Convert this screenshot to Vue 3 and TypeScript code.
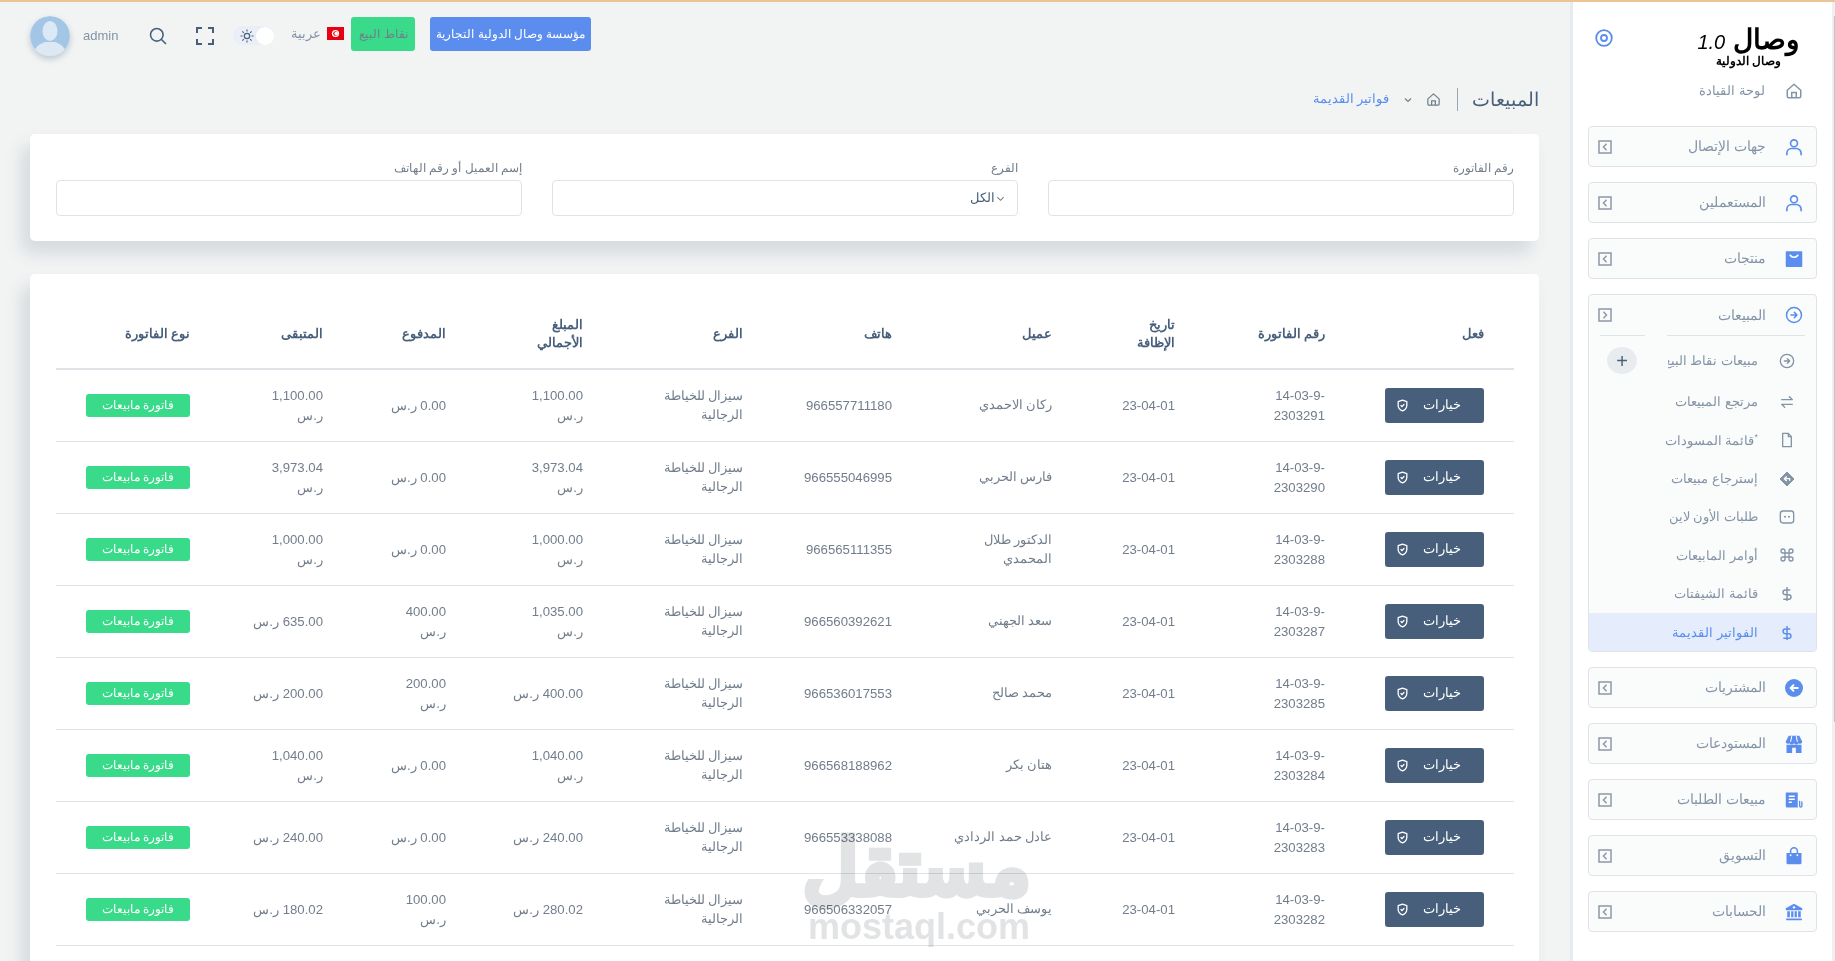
<script setup lang="ts">
interface Invoice {
  no: string
  client: string
  phone: string
  total: string
  paid: string
  left: string
}

interface NavItem {
  label: string
  icon: string
  star?: boolean
}

const invoices: Invoice[] = [
  { no: '14-03-9-2303291', client: 'ركان الاحمدي', phone: '966557711180', total: '1,100.00', paid: '0.00', left: '1,100.00' },
  { no: '14-03-9-2303290', client: 'فارس الحربي', phone: '966555046995', total: '3,973.04', paid: '0.00', left: '3,973.04' },
  { no: '14-03-9-2303288', client: 'الدكتور طلال المحمدي', phone: '966565111355', total: '1,000.00', paid: '0.00', left: '1,000.00' },
  { no: '14-03-9-2303287', client: 'سعد الجهني', phone: '966560392621', total: '1,035.00', paid: '400.00', left: '635.00' },
  { no: '14-03-9-2303285', client: 'محمد صالح', phone: '966536017553', total: '400.00', paid: '200.00', left: '200.00' },
  { no: '14-03-9-2303284', client: 'هتان بكر', phone: '966568188962', total: '1,040.00', paid: '0.00', left: '1,040.00' },
  { no: '14-03-9-2303283', client: 'عادل حمد الردادي', phone: '966553338088', total: '240.00', paid: '0.00', left: '240.00' },
  { no: '14-03-9-2303282', client: 'يوسف الحربي', phone: '966506332057', total: '280.02', paid: '100.00', left: '180.02' }
]

const headers = ['فعل', 'رقم الفاتورة', 'تاريخ الإظافة', 'عميل', 'هاتف', 'الفرع', 'المبلغ الأجمالي', 'المدفوع', 'المتبقى', 'نوع الفاتورة']
const colWidths = [159, 150, 123, 160, 149, 160, 137, 123, 133, 164]

const topItems: NavItem[] = [
  { label: 'جهات الإتصال', icon: 'user' },
  { label: 'المستعملين', icon: 'user' },
  { label: 'منتجات', icon: 'box' }
]

const subItems: NavItem[] = [
  { label: 'مرتجع المبيعات', icon: 'swap' },
  { label: 'قائمة المسودات', icon: 'file', star: true },
  { label: 'إسترجاع مبيعات', icon: 'turn' },
  { label: 'طلبات الأون لاين', icon: 'chat' },
  { label: 'أوامر المابيعات', icon: 'command' },
  { label: 'قائمة الشيفتات', icon: 'dollar' }
]

const bottomItems: NavItem[] = [
  { label: 'المشتريات', icon: 'back' },
  { label: 'المستودعات', icon: 'store' },
  { label: 'مبيعات الطلبات', icon: 'receipt' },
  { label: 'التسويق', icon: 'bag' },
  { label: 'الحسابات', icon: 'bank' }
]

const icons: Record<string, string> = {
  home: '<path d="M3 11 12 3l9 8v8a2 2 0 0 1-2 2H5a2 2 0 0 1-2-2z" fill="none" stroke="currentColor" stroke-width="2" stroke-linejoin="round"/><path d="M9 21v-7h6v7" fill="none" stroke="currentColor" stroke-width="2"/>',
  user: '<circle cx="12" cy="7" r="4.6" fill="none" stroke="currentColor" stroke-width="2.2"/><path d="M2.5 23v-2.5a6.5 6.5 0 0 1 6.500-6.500h6a6.500 6.500 0 0 1 6.500 6.500V23" fill="none" stroke="currentColor" stroke-width="2.2"/>',
  box: '<rect x="1" y="1.500" width="22" height="21" rx="1" fill="currentColor"/><path d="M7 7c2 3.500 8 3.500 10 0" fill="none" stroke="#fff" stroke-width="2.200" stroke-linecap="round"/>',
  forward: '<circle cx="12" cy="12" r="10" fill="none" stroke="currentColor" stroke-width="2"/><path d="M8 12h8M12.500 8.500 16 12l-3.500 3.500" fill="none" stroke="currentColor" stroke-width="2" stroke-linecap="round" stroke-linejoin="round"/>',
  swap: '<path d="M4 8.500h16M15.500 4 20 8.500M20 15.500H4M8.500 20 4 15.500" fill="none" stroke="currentColor" stroke-width="2" stroke-linecap="round" stroke-linejoin="round"/>',
  file: '<path d="M14 2H5.500v20h13V7z" fill="none" stroke="currentColor" stroke-width="2" stroke-linejoin="round"/><path d="M14 2v5h4.500" fill="none" stroke="currentColor" stroke-width="2"/>',
  turn: '<path d="M12 1.500 22.500 12 12 22.500 1.500 12z" fill="currentColor" stroke="currentColor" stroke-width="1.500" stroke-linejoin="round"/><path d="M16 14v-2.500H8.500M11 8.500l-3 3 3 3" fill="none" stroke="#fff" stroke-width="2" stroke-linecap="round" stroke-linejoin="round"/>',
  chat: '<rect x="2" y="3" width="20" height="18" rx="4" fill="none" stroke="currentColor" stroke-width="2"/><circle cx="9" cy="11.500" r="1.500" fill="currentColor"/><circle cx="15" cy="11.500" r="1.500" fill="currentColor"/>',
  command: '<path d="M15 6v12a3 3 0 1 0 3-3H6a3 3 0 1 0 3 3V6a3 3 0 1 0-3 3h12a3 3 0 1 0-3-3z" fill="none" stroke="currentColor" stroke-width="2" stroke-linejoin="round"/>',
  dollar: '<path d="M12 1.500v21M17 6H9.500a3.500 3.500 0 0 0 0 7h5a3.500 3.500 0 0 1 0 7H6.500" fill="none" stroke="currentColor" stroke-width="2.200"/>',
  back: '<circle cx="12" cy="12" r="12" fill="currentColor"/><path d="M18 12H8M12 7.500 7.500 12l4.500 4.500" fill="none" stroke="#fff" stroke-width="2.600"/>',
  store: '<path d="M5 1h14l4 7.500a3 3 0 0 1-5 2.500 3.500 3.500 0 0 1-6 0 3.500 3.500 0 0 1-6 0 3 3 0 0 1-5-2.500z" fill="currentColor"/><path d="M9 1.500 7.500 9M15 1.500 16.500 9" stroke="#fff" stroke-width="1.400"/><path d="M2 13h7.500v11H2zM14.500 13H22v11h-7.500zM9.500 13h5v4h-5z" fill="currentColor"/>',
  receipt: '<path d="M1 2h16v18a2 2 0 0 0 .5 2H3a2 2 0 0 1-2-2z" fill="currentColor"/><path d="M5 7h8M5 11h8M5 15h4" stroke="#fff" stroke-width="2"/><path d="M19.500 13v7a1.500 1.500 0 0 0 3 0v-6" fill="none" stroke="currentColor" stroke-width="1.800"/>',
  bag: '<path d="M2 8h20v13a2 2 0 0 1-2 2H4a2 2 0 0 1-2-2z" fill="currentColor"/><path d="M7.500 11V5.500a4.500 4.500 0 0 1 9 0V11" fill="none" stroke="currentColor" stroke-width="2"/><circle cx="7.500" cy="11" r="1.200" fill="#fff"/><circle cx="16.500" cy="11" r="1.200" fill="#fff"/>',
  bank: '<path d="M12 1 23 7v2.500H1V7z" fill="currentColor"/><circle cx="12" cy="5.800" r="1.600" fill="#fff"/><path d="M3 11h3.500v8H3zM8.200 11h3v8h-3zM12.800 11h3v8h-3zM17.500 11H21v8h-3.500zM1.500 20.500h21V23h-21z" fill="currentColor"/>',
  shield: '<path d="M12 2 4 5v6.500c0 5 3.400 8.700 8 10.500 4.600-1.800 8-5.500 8-10.500V5z" fill="none" stroke="currentColor" stroke-width="2.400" stroke-linejoin="round"/><path d="m8.500 11.500 2.500 2.500 4.500-4.500" fill="none" stroke="currentColor" stroke-width="2.400"/>'
}
</script>

<template>
  <div class="page">
    <div class="rail"><i></i></div>

    <aside class="sidebar">
      <div class="brand">
        <div class="brand__text">
          <div class="brand__name">وصال <em>1.0</em></div>
          <div class="brand__sub">وصال الدولية</div>
        </div>
        <svg class="brand__dot" viewBox="0 0 18 18">
          <circle cx="9" cy="9" r="7.800" fill="none" stroke="currentColor" stroke-width="1.800" />
          <circle cx="9" cy="9" r="3" fill="none" stroke="currentColor" stroke-width="1.800" />
        </svg>
      </div>

      <div class="dash">
        <svg class="dash__icon" viewBox="0 0 24 24" v-html="icons.home"></svg>
        <span>لوحة القيادة</span>
      </div>

      <div v-for="item in topItems" :key="item.label" class="nav-item">
        <svg class="nav-icon" viewBox="0 0 24 24" v-html="icons[item.icon]"></svg>
        <span class="nav-label">{{ item.label }}</span>
        <svg class="nav-toggle" viewBox="0 0 14 14">
          <rect x="1" y="1" width="12" height="12" fill="none" stroke="currentColor" stroke-width="1.500" />
          <path d="M8.500 3.800 5.500 7l3 3.200" fill="none" stroke="currentColor" stroke-width="1.500" />
        </svg>
      </div>

      <div class="nav-group">
        <div class="nav-group__head">
          <svg class="nav-icon" viewBox="0 0 24 24" v-html="icons.forward"></svg>
          <span class="nav-label">المبيعات</span>
          <svg class="nav-toggle" viewBox="0 0 14 14">
            <rect x="1" y="1" width="12" height="12" fill="none" stroke="currentColor" stroke-width="1.500" />
            <path d="M5.500 3.800 8.500 7l-3 3.200" fill="none" stroke="currentColor" stroke-width="1.500" />
          </svg>
        </div>
        <div class="nav-group__rule">
          <i class="rule-long"></i>
          <i class="rule-short"></i>
        </div>

        <div class="sub-item sub-item--first">
          <svg class="sub-icon" viewBox="0 0 24 24" v-html="icons.forward"></svg>
          <span class="sub-label sub-label--clip">مبيعات نقاط البيع</span>
          <span class="sub-add">+</span>
        </div>
        <div v-for="item in subItems" :key="item.label" class="sub-item">
          <svg class="sub-icon" viewBox="0 0 24 24" v-html="icons[item.icon]"></svg>
          <span class="sub-label"><sup v-if="item.star" class="sub-star">*</sup>{{ item.label }}</span>
        </div>
        <div class="sub-item sub-item--active">
          <svg class="sub-icon" viewBox="0 0 24 24" v-html="icons.dollar"></svg>
          <span class="sub-label">الفواتير القديمة</span>
        </div>
      </div>

      <div v-for="item in bottomItems" :key="item.label" class="nav-item">
        <svg class="nav-icon" viewBox="0 0 24 24" v-html="icons[item.icon]"></svg>
        <span class="nav-label">{{ item.label }}</span>
        <svg class="nav-toggle" viewBox="0 0 14 14">
          <rect x="1" y="1" width="12" height="12" fill="none" stroke="currentColor" stroke-width="1.500" />
          <path d="M8.500 3.800 5.500 7l3 3.200" fill="none" stroke="currentColor" stroke-width="1.500" />
        </svg>
      </div>
    </aside>

    <main class="main">
      <header class="topbar">
        <svg class="avatar" viewBox="0 0 40 40">
          <circle cx="20" cy="20" r="20" fill="#a4c6e6" />
          <ellipse cx="20" cy="15" rx="7.500" ry="10" fill="#dce9f5" />
          <path d="M4 40c0-10 6-12 11-14h10c5 2 11 4 11 14z" fill="#dce9f5" />
        </svg>
        <span class="topbar__admin">admin</span>
        <svg class="topbar__search" viewBox="0 0 18 18">
          <circle cx="7.800" cy="7.800" r="6.300" fill="none" stroke="currentColor" stroke-width="1.600" />
          <path d="m12.500 12.500 4.500 4.500" stroke="currentColor" stroke-width="1.600" />
        </svg>
        <svg class="topbar__expand" viewBox="0 0 18 18">
          <path d="M1 6V1h5M12 1h5v5M17 12v5h-5M6 17H1v-5" fill="none" stroke="currentColor" stroke-width="2" />
        </svg>
        <div class="theme-toggle">
          <svg viewBox="0 0 14 14">
            <circle cx="7" cy="7" r="2.700" fill="none" stroke="currentColor" stroke-width="1.200" />
            <path d="M7 .5v2M7 11.500v2M.5 7h2M11.500 7h2M2.400 2.400l1.400 1.400M10.200 10.200l1.400 1.400M2.400 11.600l1.400-1.400M10.200 3.800l1.400-1.400" stroke="currentColor" stroke-width="1.100" />
          </svg>
          <i></i>
        </div>
        <span class="topbar__lang">عربية</span>
        <svg class="topbar__flag" viewBox="0 0 17 13">
          <rect width="17" height="13" fill="#e70013" />
          <circle cx="8.500" cy="6.500" r="3.600" fill="#fff" />
          <circle cx="8.500" cy="6.500" r="2.300" fill="#e70013" />
          <circle cx="9.200" cy="6.500" r="1.800" fill="#fff" />
        </svg>
        <button class="btn-pos" type="button">نقاط البيع</button>
        <button class="btn-company" type="button">مؤسسة وصال الدولية التجارية</button>
      </header>

      <div class="crumbs">
        <h1 class="crumbs__title">المبيعات</h1>
        <svg class="crumbs__home" viewBox="0 0 24 24" v-html="icons.home"></svg>
        <svg class="crumbs__chev" viewBox="0 0 10 10">
          <path d="m2 3.500 3 3 3-3" fill="none" stroke="currentColor" stroke-width="1.200" />
        </svg>
        <span class="crumbs__link">فواتير القديمة</span>
      </div>

      <section class="card filters">
        <label class="field">
          <span>رقم الفاتورة</span>
          <div class="control"></div>
        </label>
        <label class="field">
          <span>الفرع</span>
          <div class="control control--select">
            <svg viewBox="0 0 10 10">
              <path d="m1.500 3.500 3.500 3.500 3.500-3.500" fill="none" stroke="currentColor" stroke-width="1.200" />
            </svg>
            الكل
          </div>
        </label>
        <label class="field">
          <span>إسم العميل أو رقم الهاتف</span>
          <div class="control"></div>
        </label>
      </section>

      <section class="card table-card">
        <table class="sales">
          <colgroup>
            <col v-for="(w, i) in colWidths" :key="i" :width="w" />
          </colgroup>
          <thead>
            <tr>
              <th v-for="h in headers" :key="h">{{ h }}</th>
            </tr>
          </thead>
          <tbody>
            <tr v-for="row in invoices" :key="row.no">
              <td>
                <button class="btn-options" type="button">
                  خيارات
                  <svg viewBox="0 0 24 24" v-html="icons.shield"></svg>
                </button>
              </td>
              <td>{{ row.no }}</td>
              <td>23-04-01</td>
              <td class="cell-name">{{ row.client }}</td>
              <td>{{ row.phone }}</td>
              <td class="cell-name">سيزال للخياطة الرجالية</td>
              <td>{{ row.total }} ر.س</td>
              <td>{{ row.paid }} ر.س</td>
              <td>{{ row.left }} ر.س</td>
              <td><span class="badge">فاتورة مابيعات</span></td>
            </tr>
          </tbody>
        </table>
      </section>
    </main>

    <div class="watermark">
      <div class="watermark__ar">مستقل</div>
      <div class="watermark__en">mostaql.com</div>
    </div>
  </div>
</template>

<style scoped>
.page {
  position: relative;
  display: flex;
  direction: rtl;
  width: 100vw;
  height: 100vh;
  box-sizing: border-box;
  overflow: hidden;
  border-top: 2px solid #edc49a;
  background: #f2f4f4;
  color: #727e8c;
  font-family: "Liberation Sans", sans-serif;
  font-size: 13px;
  line-height: 1.5;
}

.rail {
  flex: 0 0 3px;
  padding-top: 14px;
  background: #eef0f2;
}

.rail i {
  display: block;
  width: 1px;
  height: 706px;
  background: #bfc3c7;
}

.sidebar {
  flex: 0 0 259px;
  box-sizing: border-box;
  padding: 0 15px;
  box-shadow: -3px 0 0 #e6ebf0;
  background: #fff;
}

.brand {
  display: flex;
  justify-content: space-between;
  height: 43px;
  padding: 21px 17px 0 7px;
  color: #000;
}

.brand__name {
  font-size: 28px;
  font-weight: 700;
  line-height: 34px;
  white-space: nowrap;
}

.brand__name em {
  font-size: 20px;
  font-weight: 400;
}

.brand__sub {
  margin-top: -6px;
  margin-right: 19px;
  font-size: 12px;
  font-weight: 700;
  line-height: 16px;
}

.brand__dot {
  width: 18px;
  height: 18px;
  margin-top: 6px;
  color: #5a8dee;
}

.dash {
  display: flex;
  align-items: center;
  gap: 20px;
  height: 20px;
  padding-right: 14px;
  margin-top: 15px;
  margin-bottom: 25px;
  color: #8494a7;
}

.dash__icon {
  width: 18px;
  height: 18px;
}

.nav-item,
.nav-group__head {
  display: flex;
  align-items: center;
  box-sizing: border-box;
  height: 41px;
  padding: 0 13px 0 9px;
}

.nav-item {
  margin-bottom: 15px;
  border: 1px solid #dfe3e7;
  border-radius: 4px;
  background: #fafbfb;
}

.nav-icon {
  flex: 0 0 18px;
  width: 18px;
  height: 18px;
  color: #5a8dee;
}

.nav-label {
  flex: 1;
  margin-right: 19px;
  color: #8494a7;
  font-size: 14px;
  white-space: nowrap;
}

.nav-toggle {
  flex: 0 0 14px;
  width: 14px;
  height: 14px;
  color: #8f98a6;
}

.nav-group {
  box-sizing: border-box;
  height: 358px;
  margin-bottom: 15px;
  overflow: hidden;
  border: 1px solid #dfe3e7;
  border-radius: 4px;
  background: #fafbfb;
}

.nav-group__head {
  height: 40px;
}

.nav-group__rule {
  display: flex;
  gap: 22px;
  height: 1px;
  margin-right: 11px;
}

.nav-group__rule i {
  display: block;
  height: 1px;
  background: #dfe3e7;
}

.rule-long {
  width: 138px;
}

.rule-short {
  width: 45px;
}

.sub-item {
  display: flex;
  align-items: center;
  height: 38.3px;
  padding-right: 21px;
}

.sub-item--first {
  height: 47px;
  padding-top: 2px;
  box-sizing: border-box;
}

.sub-item--active {
  height: 40px;
  background: #e5edfc;
}

.sub-icon {
  flex: 0 0 16px;
  width: 16px;
  height: 16px;
  color: #8494a7;
}

.sub-item--active .sub-icon,
.sub-item--active .sub-label {
  color: #5a8dee;
}

.sub-label {
  margin-right: 21px;
  color: #8494a7;
  white-space: nowrap;
}

.sub-label--clip {
  width: 90px;
  overflow: hidden;
}

.sub-star {
  font-size: 9px;
  line-height: 0;
}

.sub-add {
  display: flex;
  align-items: center;
  justify-content: center;
  width: 30px;
  height: 27px;
  margin-right: 31px;
  border-radius: 50%;
  background: #e9ecef;
  color: #475f7b;
  font-size: 20px;
  line-height: 1;
}

.main {
  flex: 1;
  min-width: 0;
  box-sizing: border-box;
  padding: 0 34px 0 30px;
}

.topbar {
  display: flex;
  direction: ltr;
  align-items: flex-start;
  height: 54px;
  padding-top: 14px;
  box-sizing: border-box;
}

.avatar {
  flex: 0 0 40px;
  width: 40px;
  height: 40px;
  border-radius: 50%;
  box-shadow: 0 3px 6px rgba(71, 95, 123, 0.3);
}

.topbar__admin {
  margin: 10px 0 0 13px;
  color: #8494a7;
}

.topbar__search {
  width: 18px;
  height: 18px;
  margin: 11px 0 0 31px;
  color: #475f7b;
}

.topbar__expand {
  width: 18px;
  height: 18px;
  margin: 11px 0 0 29px;
  color: #475f7b;
}

.theme-toggle {
  display: flex;
  align-items: center;
  justify-content: space-between;
  width: 41px;
  height: 19px;
  margin: 10px 0 0 19px;
  padding: 0 0 0 7px;
  box-sizing: border-box;
  border-radius: 10px;
  background: #e9eef7;
  color: #475f7b;
}

.theme-toggle svg {
  width: 14px;
  height: 14px;
}

.theme-toggle i {
  width: 18px;
  height: 18px;
  border-radius: 50%;
  background: #fff;
}

.topbar__lang {
  margin: 8px 0 0 17px;
  color: #8494a7;
}

.topbar__flag {
  width: 17px;
  height: 13px;
  margin: 11px 0 0 6px;
}

.btn-pos,
.btn-company {
  height: 34px;
  margin: 1px 0 0 7px;
  padding: 0;
  border: 0;
  border-radius: 3px;
  font: inherit;
  font-size: 12px;
}

.btn-pos {
  width: 64px;
  background: #39da8a;
  color: #727e8c;
}

.btn-company {
  width: 161px;
  margin-left: 15px;
  background: #5a8dee;
  color: #fff;
}

.crumbs {
  display: flex;
  align-items: center;
  height: 23px;
  margin-top: 32px;
  margin-bottom: 23px;
}

.crumbs__title {
  margin: 0;
  padding-left: 14px;
  border-left: 1px solid #9aa6b3;
  color: #475f7b;
  font-size: 19px;
  font-weight: 400;
  line-height: 23px;
}

.crumbs__home {
  width: 15px;
  height: 15px;
  margin-right: 16px;
  color: #727e8c;
}

.crumbs__chev {
  width: 10px;
  height: 10px;
  margin-right: 13px;
  color: #727e8c;
}

.crumbs__link {
  margin-right: 14px;
  color: #5a8dee;
  font-size: 12.500px;
}

.card {
  border-radius: 5px;
  background: #fff;
  box-shadow: -8px 12px 18px 0 rgba(25, 42, 70, 0.13);
}

.filters {
  display: grid;
  grid-template-columns: repeat(3, 466px);
  gap: 30px;
  height: 107px;
  box-sizing: border-box;
  padding: 26px 25px;
  margin-bottom: 33px;
}

.field {
  display: block;
}

.field span {
  display: block;
  height: 16px;
  margin-bottom: 4px;
  color: #727e8c;
  font-size: 12px;
  line-height: 16px;
}

.control {
  box-sizing: border-box;
  height: 36px;
  border: 1px solid #dfe3e7;
  border-radius: 4px;
  background: #fff;
}

.control--select {
  display: flex;
  align-items: center;
  gap: 1px;
  padding-right: 12px;
  color: #475f7b;
  font-size: 13px;
}

.control--select svg {
  width: 9px;
  height: 9px;
  color: #727e8c;
}

.table-card {
  padding: 26px 25px;
}

.sales {
  width: 1458px;
  table-layout: fixed;
  border-collapse: collapse;
}

.sales th {
  height: 68px;
  padding: 0 30px;
  border-bottom: 2px solid #dfe3e7;
  color: #475f7b;
  font-size: 12.500px;
  font-weight: 700;
  line-height: 18px;
  text-align: right;
}

.sales td {
  height: 71px;
  padding: 0 30px;
  border-bottom: 1px solid #dfe3e7;
  font-size: 13.200px;
  text-align: right;
  vertical-align: middle;
}

.sales td.cell-name {
  font-size: 12.500px;
}

.btn-options {
  display: flex;
  align-items: center;
  box-sizing: border-box;
  width: 99px;
  height: 35px;
  padding: 0 23px 0 11px;
  border: 0;
  border-radius: 3px;
  background: #475f7b;
  color: #fff;
  font: inherit;
  font-size: 12.500px;
}

.btn-options svg {
  width: 13px;
  height: 13px;
  margin-right: auto;
}

.badge {
  display: block;
  width: 104px;
  height: 23px;
  border-radius: 3px;
  background: #39da8a;
  color: #fff;
  font-size: 12px;
  line-height: 23px;
  text-align: center;
}

.watermark {
  position: absolute;
  top: 826px;
  left: 810px;
  width: 221px;
  color: #e1e3e5;
  font-weight: 700;
  line-height: 1;
  mix-blend-mode: multiply;
  pointer-events: none;
  text-align: center;
}

.watermark__ar {
  font-size: 76px;
  line-height: 79px;
  white-space: nowrap;
  -webkit-text-stroke: 5px #e1e3e5;
}

.watermark__en {
  direction: ltr;
  margin-left: -3px;
  font-size: 36px;
  line-height: 40px;
}
</style>

<style>
html,
body {
  margin: 0;
  background: #f2f4f4;
}
</style>
